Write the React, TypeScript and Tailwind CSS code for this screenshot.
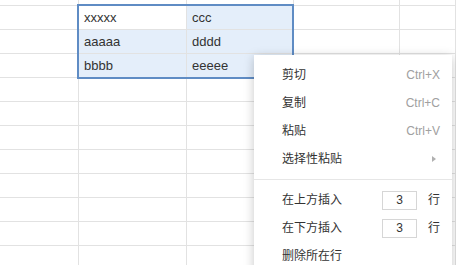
import React from "react";

const cols = ["w-[79px]", "w-[108px]", "w-[107px]", "w-[106px]", "flex-1"];
const data: Record<number, string[]> = {
  0: ["", "xxxxx", "ccc", "", ""],
  1: ["", "aaaaa", "dddd", "", ""],
  2: ["", "bbbb", "eeeee", "", ""],
};

function Row({ r }: { r: number }) {
  const d = data[r] || ["", "", "", "", ""];
  return (
    <div className="flex h-[24px] shrink-0">
      {cols.map((c, i) => {
        const sel = r <= 2 && (i === 1 || i === 2) && !(r === 0 && i === 1);
        return (
          <div
            key={i}
            className={`${c} h-full border-r border-b border-[#e2e2e2] flex items-center pl-[5px] text-[13px] text-[#333] ${
              sel ? "bg-[#e4eefa]" : "bg-white"
            }`}
          >
            {d[i]}
          </div>
        );
      })}
    </div>
  );
}

function Item({ label, right }: { label: string; right?: React.ReactNode }) {
  return (
    <div className="h-[28px] flex items-center justify-between pl-[28px] pr-[12px] text-[12px] text-[#333]">
      <span>{label}</span>
      {right}
    </div>
  );
}

function Insert({ label }: { label: string }) {
  return (
    <div className="h-[28px] flex items-center pl-[28px] pr-[12px] text-[12px] text-[#333]">
      <span className="flex-1">{label}</span>
      <div className="w-[35px] h-[19px] border border-[#d6d6d6] flex items-center justify-center text-[12px] text-[#333] mr-[11px]">
        3
      </div>
      <span>行</span>
    </div>
  );
}

export default function App() {
  return (
    <div
      className="relative w-[456px] h-[265px] overflow-hidden bg-white"
      style={{ fontFamily: '"Liberation Sans", Arial, "Noto Sans CJK SC", sans-serif' }}
    >
      <div className="flex flex-col">
        <div className="flex h-[6px] shrink-0">
          {cols.map((c, i) => (
            <div key={i} className={`${c} h-full border-r border-b border-[#e2e2e2]`} />
          ))}
        </div>
        {Array.from({ length: 11 }).map((_, r) => (
          <Row key={r} r={r} />
        ))}
      </div>

      <div className="absolute left-[77px] top-[4px] w-[217px] h-[75px] border-2 border-[#5f8cc4] pointer-events-none" />

      <div className="absolute left-[254px] top-[55px] w-[198px] h-[230px] bg-white shadow-[0_2px_10px_rgba(0,0,0,0.22)] pt-[6px]">
        <Item label="剪切" right={<span className="text-[#a0a0a0]">Ctrl+X</span>} />
        <Item label="复制" right={<span className="text-[#a0a0a0]">Ctrl+C</span>} />
        <Item label="粘贴" right={<span className="text-[#a0a0a0]">Ctrl+V</span>} />
        <Item
          label="选择性粘贴"
          right={
            <span className="w-0 h-0 border-y-[3px] border-y-transparent border-l-[4px] border-l-[#b0b0b0] mr-[4px]" />
          }
        />
        <div className="h-[13px] pt-[6px]">
          <div className="border-t border-[#e6e6e6]" />
        </div>
        <Insert label="在上方插入" />
        <Insert label="在下方插入" />
        <Item label="删除所在行" />
      </div>
    </div>
  );
}
